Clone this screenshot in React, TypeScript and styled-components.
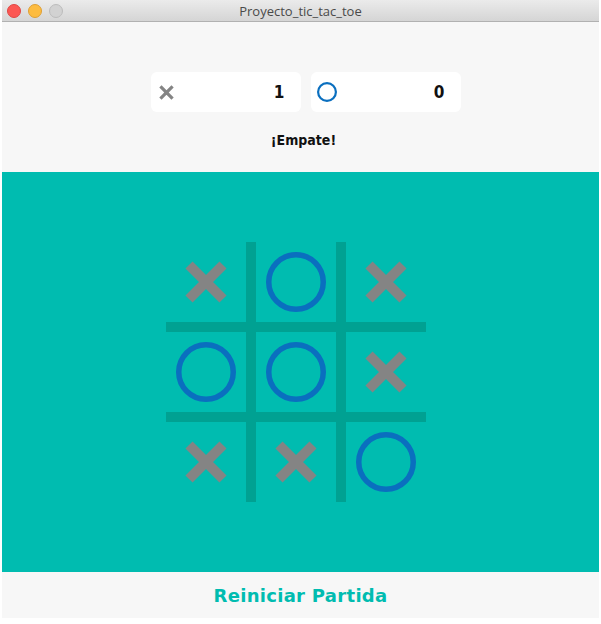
import styled, { createGlobalStyle } from 'styled-components';

type Mark = 'x' | 'o';

const BOARD: Mark[] = ['x', 'o', 'x', 'o', 'o', 'x', 'x', 'x', 'o'];

const COLORS = {
  PAGE: '#f7f7f7',
  TEAL: '#00bcb0',
  LINE: '#00a192',
  GRAY: '#848484',
  BLUE: '#0a6fbf',
};

const GlobalStyle = createGlobalStyle`
  html, body {
    margin: 0;
    padding: 0;
    background: #ffffff;
    font-family: "Liberation Sans", Arial, sans-serif;
  }
`;

const Cross = ({ size, stroke }: { size: number; stroke: number }) => (
  <svg width={size} height={size} viewBox="0 0 42 42">
    <path d="M4 4 L38 38 M38 4 L4 38" stroke={COLORS.GRAY} strokeWidth={stroke} />
  </svg>
);

const Ring = ({ size, stroke }: { size: number; stroke: number }) => (
  <svg width={size} height={size} viewBox={`0 0 ${size} ${size}`}>
    <circle
      cx={size / 2}
      cy={size / 2}
      r={size / 2 - stroke / 2}
      fill="none"
      stroke={COLORS.BLUE}
      strokeWidth={stroke}
    />
  </svg>
);

const App = () => {
  return (
    <>
      <GlobalStyle />
      <Window>
        <TitleBar>
          <Lights>
            <Light $color="#fc5753" $border="#df4744" />
            <Light $color="#fdbc40" $border="#de9f34" />
            <Light $color="#d2d2d2" $border="#bcbcbc" />
          </Lights>
          <Title>Proyecto_tic_tac_toe</Title>
        </TitleBar>

        <Header>
          <Scores>
            <ScoreCard>
              <Cross size={15} stroke={9} />
              <Score>1</Score>
            </ScoreCard>
            <ScoreCard>
              <Ring size={20} stroke={2.2} />
              <Score>0</Score>
            </ScoreCard>
          </Scores>
          <Status>¡Empate!</Status>
        </Header>

        <Stage>
          <Board>
            {BOARD.map((mark, i) => (
              <Cell key={i} $row={Math.floor(i / 3) * 2 + 1} $col={(i % 3) * 2 + 1}>
                {mark === 'x' ? <Cross size={42} stroke={10} /> : <Ring size={60} stroke={5.5} />}
              </Cell>
            ))}
            <VLine $col={2} />
            <VLine $col={4} />
            <HLine $row={2} />
            <HLine $row={4} />
          </Board>
        </Stage>

        <Footer>
          <ResetButton>Reiniciar Partida</ResetButton>
        </Footer>
      </Window>
    </>
  );
};

const Window = styled.div`
  display: flex;
  flex-direction: column;
  width: 597px;
  margin-left: 2px;
  background: ${COLORS.PAGE};
`;

const TitleBar = styled.div`
  position: relative;
  display: flex;
  align-items: center;
  justify-content: center;
  height: 21px;
  background: linear-gradient(#ebebeb, #d5d5d5);
  border-bottom: 1px solid #b1b1b1;
`;

const Lights = styled.div`
  position: absolute;
  left: 5px;
  top: 4px;
  display: flex;
  gap: 7px;
`;

const Light = styled.span<{ $color: string; $border: string }>`
  width: 12px;
  height: 12px;
  border-radius: 50%;
  background: ${(p) => p.$color};
  border: 0.5px solid ${(p) => p.$border};
`;

const Title = styled.div`
  font-family: "Open Sans", "Liberation Sans", sans-serif;
  font-size: 13px;
  color: #4a4a4a;
`;

const Header = styled.div`
  display: flex;
  flex-direction: column;
  align-items: center;
  height: 150px;
  padding-top: 50px;
  box-sizing: border-box;
`;

const Scores = styled.div`
  display: flex;
  gap: 10px;
  margin-left: 10px;
`;

const ScoreCard = styled.div`
  display: flex;
  align-items: center;
  justify-content: space-between;
  width: 150px;
  height: 40px;
  padding: 0 16px 0 6px;
  box-sizing: border-box;
  background: #ffffff;
  border-radius: 6px;

  &:first-child {
    padding-left: 8px;
  }
`;

const Score = styled.span`
  font-family: "DejaVu Sans Condensed", "DejaVu Sans", sans-serif;
  font-weight: 700;
  font-size: 17px;
  color: #111111;
`;

const Status = styled.div`
  margin-top: 20px;
  margin-left: 6px;
  font-family: "DejaVu Sans Condensed", "DejaVu Sans", sans-serif;
  font-weight: 700;
  font-size: 14px;
  color: #111111;
`;

const Stage = styled.div`
  display: flex;
  align-items: center;
  justify-content: center;
  height: 400px;
  padding-right: 10px;
  background: ${COLORS.TEAL};
`;

const Board = styled.div`
  display: grid;
  grid-template-columns: 80px 10px 80px 10px 80px;
  grid-template-rows: 80px 10px 80px 10px 80px;
`;

const Cell = styled.div<{ $row: number; $col: number }>`
  grid-row: ${(p) => p.$row};
  grid-column: ${(p) => p.$col};
  display: flex;
  align-items: center;
  justify-content: center;
`;

const VLine = styled.div<{ $col: number }>`
  grid-column: ${(p) => p.$col};
  grid-row: 1 / 6;
  background: ${COLORS.LINE};
`;

const HLine = styled.div<{ $row: number }>`
  grid-row: ${(p) => p.$row};
  grid-column: 1 / 6;
  background: ${COLORS.LINE};
`;

const Footer = styled.div`
  display: flex;
  align-items: center;
  justify-content: center;
  height: 46px;
`;

const ResetButton = styled.button`
  border: none;
  background: none;
  padding: 0;
  font-family: "DejaVu Sans", sans-serif;
  font-weight: 700;
  font-size: 18px;
  letter-spacing: 0.3px;
  color: ${COLORS.TEAL};
  cursor: pointer;
`;

export default App;
